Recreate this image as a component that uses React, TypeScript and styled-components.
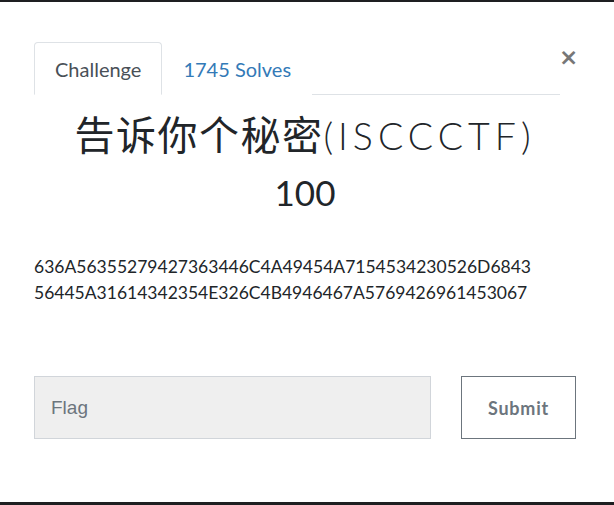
import React from "react";
import styled, { createGlobalStyle } from "styled-components";

const Global = createGlobalStyle`
  html, body { margin: 0; padding: 0; }
  body {
    background: #1e1f21;
    font-family: Lato, "Noto Sans CJK SC", sans-serif;
    width: 614px;
    height: 505px;
    overflow: hidden;
  }
`;

const Backdrop = styled.div`
  display: flex;
  flex-direction: column;
  height: 505px;
  padding-top: 2px;
  box-sizing: border-box;
`;

const Modal = styled.div`
  background: #fff;
  height: 500px;
  box-sizing: border-box;
  padding: 40px 38px 0 34px;
  display: flex;
  flex-direction: column;
`;

const HeaderRow = styled.div`
  display: flex;
  align-items: flex-start;
`;

const Tabs = styled.ul`
  flex: 1;
  display: flex;
  list-style: none;
  margin: 0;
  padding: 0;
  border-bottom: 1px solid #dee2e6;
`;

const Tab = styled.li<{ $active?: boolean }>`
  margin-bottom: -1px;
  padding: 0 20px 0 20px;
  height: 51px;
  display: flex;
  align-items: center;
  font-size: 20px;
  border: 1px solid ${(p) => (p.$active ? "#dee2e6" : "transparent")};
  border-bottom-color: ${(p) => (p.$active ? "#fff" : "transparent")};
  border-radius: 4px 4px 0 0;
  color: ${(p) => (p.$active ? "#495057" : "#337ab7")};
  background: #fff;
`;

const Close = styled.button`
  border: 0;
  background: transparent;
  padding: 0;
  width: 17px;
  margin: 0 0 0 -1px;
  font-family: "DejaVu Sans", sans-serif;
  font-size: 23px;
  font-weight: 700;
  line-height: 30px;
  color: #777;
  text-align: left;
  cursor: pointer;
`;

const Title = styled.h2`
  margin: 16px 0 0;
  text-align: center;
  font-size: 37.5px;
  font-weight: 300;
  letter-spacing: 5px;
  line-height: 48px;
  color: #212529;
`;

const Han = styled.span`
  font-size: 40px;
  font-weight: 400;
  letter-spacing: 1.5px;
`;

const Points = styled.h3`
  margin: 11px 0 0;
  text-align: center;
  font-size: 35px;
  font-weight: 400;
  line-height: 42px;
  color: #212529;
`;

const Description = styled.div`
  margin-top: 41px;
  font-size: 17.5px;
  line-height: 26px;
  color: #212529;
`;

const Form = styled.form`
  margin-top: 70px;
  display: flex;
  gap: 30px;
`;

const FlagInput = styled.input`
  width: 397px;
  height: 63px;
  box-sizing: border-box;
  background: #efefef;
  border: 1px solid #d1d5da;
  padding: 0 16px;
  font-family: "Liberation Sans", Arial, sans-serif;
  font-size: 19px;
  color: #495057;
  outline: none;
  &::placeholder { color: #6c757d; }
`;

const SubmitButton = styled.button`
  width: 115px;
  height: 63px;
  box-sizing: border-box;
  background: #fff;
  border: 1px solid #6c757d;
  font-family: Lato, sans-serif;
  font-weight: 700;
  font-size: 18px;
  color: #6c757d;
  letter-spacing: 0.8px;
`;

export default function App() {
  return (
    <>
      <Global />
      <Backdrop>
        <Modal>
          <HeaderRow>
            <Tabs>
              <Tab $active>Challenge</Tab>
              <Tab>1745 Solves</Tab>
            </Tabs>
            <Close aria-label="Close">×</Close>
          </HeaderRow>
          <Title>
            <Han>告诉你个秘密</Han>(ISCCCTF)
          </Title>
          <Points>100</Points>
          <Description>
            636A56355279427363446C4A49454A7154534230526D6843
            <br />
            56445A31614342354E326C4B4946467A5769426961453067
          </Description>
          <Form onSubmit={(e) => e.preventDefault()}>
            <FlagInput placeholder="Flag" />
            <SubmitButton type="submit">Submit</SubmitButton>
          </Form>
        </Modal>
      </Backdrop>
    </>
  );
}
